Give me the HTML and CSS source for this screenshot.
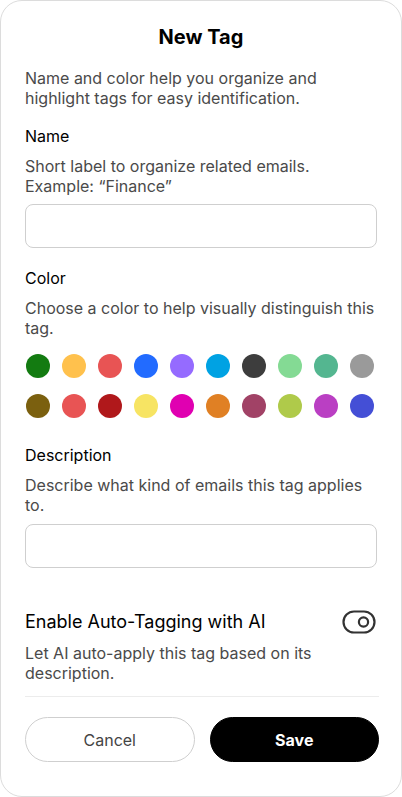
FILE: index.html
```html
<!DOCTYPE html>
<html lang="en">
<head>
    <meta charset="UTF-8">
    <meta name="viewport" content="width=device-width, initial-scale=1.0">
    <title>New Tag</title>
    <link rel="stylesheet" href="styles.css">
</head>
<body>
    <div class="modal">
        <h1 class="title">New Tag</h1>
        <p class="intro">Name and color help you organize and highlight tags for easy identification.</p>

        <div class="field">
            <label class="label" for="tag-name">Name</label>
            <p class="hint">Short label to organize related emails. Example: “Finance”</p>
            <input class="input" id="tag-name" type="text">
        </div>

        <div class="field field-color">
            <div class="label">Color</div>
            <p class="hint">Choose a color to help visually distinguish this tag.</p>
            <div class="swatches">
                <span class="swatch" style="background:#137b11"></span>
                <span class="swatch" style="background:#ffc14d"></span>
                <span class="swatch" style="background:#e85454"></span>
                <span class="swatch" style="background:#226bff"></span>
                <span class="swatch" style="background:#956bff"></span>
                <span class="swatch" style="background:#00a2e3"></span>
                <span class="swatch" style="background:#3d3d3d"></span>
                <span class="swatch" style="background:#84da94"></span>
                <span class="swatch" style="background:#54b690"></span>
                <span class="swatch" style="background:#9a9a9a"></span>
                <span class="swatch" style="background:#7b600f"></span>
                <span class="swatch" style="background:#e85454"></span>
                <span class="swatch" style="background:#b0181b"></span>
                <span class="swatch" style="background:#f7e463"></span>
                <span class="swatch" style="background:#e000b1"></span>
                <span class="swatch" style="background:#e08024"></span>
                <span class="swatch" style="background:#a14266"></span>
                <span class="swatch" style="background:#afca4a"></span>
                <span class="swatch" style="background:#ba3fc3"></span>
                <span class="swatch" style="background:#444fd6"></span>
            </div>
        </div>

        <div class="field field-desc">
            <label class="label" for="tag-desc">Description</label>
            <p class="hint">Describe what kind of emails this tag applies to.</p>
            <input class="input" id="tag-desc" type="text">
        </div>

        <div class="auto">
            <div class="auto-head">
                <span class="auto-title">Enable Auto-Tagging with AI</span>
                <svg class="toggle" width="34" height="24" viewBox="0 0 34 24" fill="none">
                    <rect x="1.5" y="1.5" width="31" height="21" rx="10.5" stroke="#333" stroke-width="2.2"/>
                    <circle cx="21.5" cy="12" r="4.6" stroke="#333" stroke-width="2.2"/>
                </svg>
            </div>
            <p class="hint">Let AI auto-apply this tag based on its description.</p>
        </div>

        <div class="actions">
            <button class="btn btn-cancel">Cancel</button>
            <button class="btn btn-save">Save</button>
        </div>
    </div>
</body>
</html>
```

FILE: styles.css
```css
* {
    box-sizing: border-box;
}

body {
    margin: 0;
    font-family: Inter, "Noto Sans", sans-serif;
    background-color: #ffffff;
    color: #111111;
}

.modal {
    width: 402px;
    height: 797px;
    border: 1px solid #dcdcdc;
    border-radius: 22px;
    padding: 24px 24px 0 24px;
    background: #ffffff;
}

.title {
    margin: 0;
    font-size: 20px;
    line-height: 24px;
    font-weight: 700;
    text-align: center;
    color: #000000;
}

.intro,
.hint {
    margin: 0;
    font-size: 16px;
    line-height: 20px;
    color: #4a4a4a;
}

.intro {
    margin-top: 19px;
}

.field {
    margin-top: 18px;
}

.field-color {
    margin-top: 20px;
}

.field-desc {
    margin-top: 27px;
}

.label {
    display: block;
    font-size: 16px;
    line-height: 20px;
    font-weight: 400;
    color: #000000;
}

.label + .hint {
    margin-top: 10px;
}

.input {
    display: block;
    width: 100%;
    height: 44px;
    margin-top: 8px;
    border: 1px solid #cfcfcf;
    border-radius: 8px;
    background: #ffffff;
    font-family: inherit;
    font-size: 16px;
    padding: 0 12px;
    outline: none;
}

.field-desc .input {
    margin-top: 9px;
}

.swatches {
    display: grid;
    grid-template-columns: repeat(10, 24px);
    column-gap: 12px;
    row-gap: 16px;
    margin-top: 16px;
    padding-left: 1px;
}

.swatch {
    width: 24px;
    height: 24px;
    border-radius: 50%;
}

.auto {
    margin-top: 42px;
}

.auto-head {
    display: flex;
    justify-content: space-between;
    align-items: center;
    height: 24px;
}

.auto-title {
    font-size: 18px;
    line-height: 24px;
    font-weight: 400;
    color: #000000;
}

.toggle {
    margin-right: 1px;
}

.auto .hint {
    margin-top: 9px;
}

.actions {
    display: flex;
    gap: 15px;
    margin-top: 13px;
    padding-top: 20px;
    margin-right: -2px;
    border-top: 1px solid #ececec;
}

.btn {
    flex: 1;
    height: 45px;
    border-radius: 23px;
    font-family: inherit;
    font-size: 16px;
    cursor: pointer;
}

.btn-cancel {
    background: #ffffff;
    border: 1px solid #cfcfcf;
    color: #444444;
}

.btn-save {
    background: #000000;
    border: 1px solid #000000;
    color: #ffffff;
    font-weight: 700;
}
```
